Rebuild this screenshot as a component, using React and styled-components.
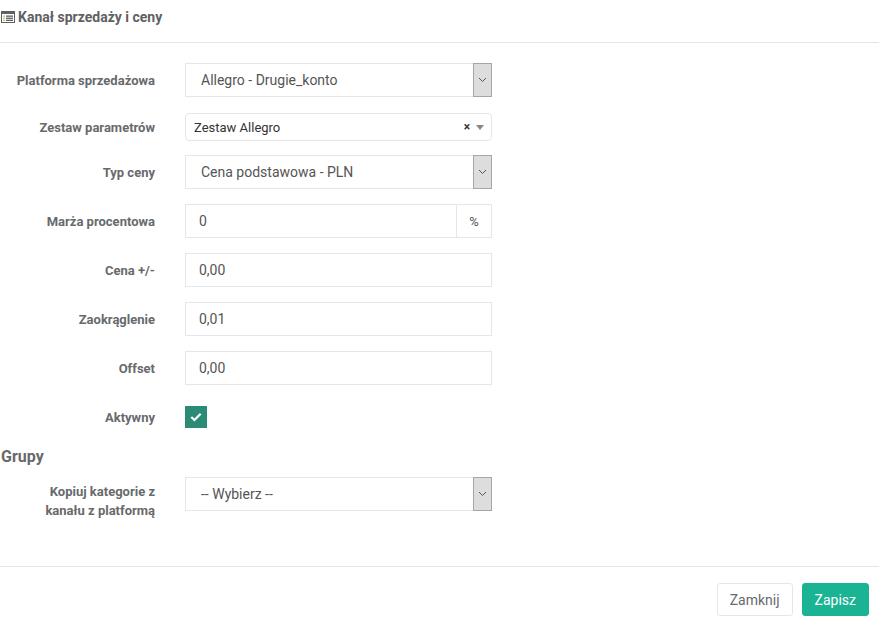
import React from 'react'
import styled, { createGlobalStyle } from 'styled-components'

const GlobalStyle = createGlobalStyle`
  html, body {
    margin: 0;
    padding: 0;
    background: #ffffff;
  }
  body {
    font-family: Roboto, "Liberation Sans", sans-serif;
    color: #676a6c;
  }
`

//
// Colours
//
const c = {
  text: '#676a6c',
  border: '#e5e6e7',
  primary: '#1ab394',
  check: '#2a8c74'
}

const Modal = styled.div`
  width: 879px;
  min-height: 626px;
  display: flex;
  flex-direction: column;
`

const Header = styled.div`
  height: 43px;
  border-bottom: 1px solid #e5e5e5;
  display: flex;
  align-items: flex-start;
  padding: 8px 0 0 1px;
  box-sizing: border-box;
  gap: 3px;
`

const Title = styled.h4`
  margin: 0;
  font-size: 14px;
  line-height: 18px;
  font-weight: 700;
  color: #5f6163;
`

const IconWrap = styled.span`
  display: flex;
  padding-top: 3px;
`

const Body = styled.div`
  padding: 20px 0 46px;
  border-bottom: 1px solid #e5e5e5;
`

const Row = styled.div`
  display: grid;
  grid-template-columns: 170px 307px;
  column-gap: 15px;
  margin-bottom: ${({ mb }) => mb || '15px'};
  align-items: ${({ top }) => (top ? 'start' : 'center')};
`

const Label = styled.label`
  text-align: right;
  font-size: 13px;
  font-weight: 700;
  color: ${c.text};
  padding: 0 15px;
  line-height: 19px;
  ${({ top }) => top && `padding-top: 5px;`}
`

const Control = styled.div`
  position: relative;
  height: ${({ h }) => h || '34px'};
  border: 1px solid ${c.border};
  box-sizing: border-box;
  display: flex;
  align-items: center;
  font-size: 14px;
  color: #555;
  background: #fff;
`

const Value = styled.span`
  flex: 1;
  padding-left: ${({ pad }) => pad || '13px'};
`

const ArrowBox = styled.span`
  width: 17px;
  align-self: stretch;
  margin: -1px -1px -1px 0;
  background: #dddddd;
  border: 1px solid #a6a6a6;
  display: flex;
  align-items: center;
  justify-content: center;
`

const Addon = styled.span`
  width: 34px;
  align-self: stretch;
  border-left: 1px solid ${c.border};
  display: flex;
  align-items: center;
  justify-content: center;
  font-size: 13px;
  color: #555;
`

const Select2 = styled(Control)`
  border-radius: 4px;
  font-size: 13px;
  color: #333;
`

const Clear = styled.span`
  font-size: 12px;
  font-weight: 700;
  color: #333;
  margin-right: 6px;
`

const Caret = styled.span`
  width: 0;
  height: 0;
  border-left: 4px solid transparent;
  border-right: 4px solid transparent;
  border-top: 5px solid #888;
  margin-right: 7px;
`

const CheckCell = styled.div`
  height: 34px;
  display: flex;
  align-items: center;
`

const Check = styled.span`
  width: 22px;
  height: 22px;
  background: ${c.check};
  display: flex;
  align-items: center;
  justify-content: center;
`

const Section = styled.h3`
  margin: 13px 0 10px 1px;
  font-size: 16px;
  line-height: 20px;
  font-weight: 700;
  color: ${c.text};
`

const Footer = styled.div`
  display: flex;
  justify-content: flex-end;
  gap: 9px;
  padding: 16px 10px;
`

const Button = styled.button`
  height: 33px;
  padding: 0 12px;
  font-family: Roboto, "Liberation Sans", sans-serif;
  font-size: 14px;
  border-radius: 3px;
  border: 1px solid ${({ primary }) => (primary ? c.primary : c.border)};
  background: ${({ primary }) => (primary ? c.primary : '#fff')};
  color: ${({ primary }) => (primary ? '#fff' : c.text)};
`

const ListIcon = () => (
  <svg width="14" height="12" viewBox="0 0 14 12">
    <rect x="0.5" y="0.5" width="13" height="11" fill="#fff" stroke="#5f6163" />
    <rect x="0.5" y="0.5" width="13" height="2.5" fill="#5f6163" />
    <rect x="2" y="4.5" width="2" height="1.3" fill="#b5d17a" />
    <rect x="2" y="6.6" width="2" height="1.3" fill="#b5d17a" />
    <rect x="2" y="8.7" width="2" height="1.3" fill="#b5d17a" />
    <rect x="5" y="4.5" width="7" height="1.3" fill="#5f6163" />
    <rect x="5" y="6.6" width="7" height="1.3" fill="#5f6163" />
    <rect x="5" y="8.7" width="7" height="1.3" fill="#5f6163" />
  </svg>
)

const Chevron = () => (
  <svg width="9" height="6" viewBox="0 0 9 6">
    <path d="M1 1 L4.5 4.5 L8 1" fill="none" stroke="#555" strokeWidth="1" />
  </svg>
)

const Select = ({ value }) => (
  <Control>
    <Value pad="15px">{value}</Value>
    <ArrowBox><Chevron /></ArrowBox>
  </Control>
)

const Input = ({ value, addon }) => (
  <Control>
    <Value>{value}</Value>
    {addon && <Addon>{addon}</Addon>}
  </Control>
)

const App = () => (
  <Modal>
    <GlobalStyle />
    <Header>
      <IconWrap><ListIcon /></IconWrap>
      <Title>Kanał sprzedaży i ceny</Title>
    </Header>
    <Body>
      <Row mb="16px">
        <Label>Platforma sprzedażowa</Label>
        <Select value="Allegro - Drugie_konto" />
      </Row>
      <Row mb="14px">
        <Label>Zestaw parametrów</Label>
        <Select2 h="28px">
          <Value pad="8px">Zestaw Allegro</Value>
          <Clear>×</Clear>
          <Caret />
        </Select2>
      </Row>
      <Row>
        <Label>Typ ceny</Label>
        <Select value="Cena podstawowa - PLN" />
      </Row>
      <Row>
        <Label>Marża procentowa</Label>
        <Input value="0" addon="%" />
      </Row>
      <Row>
        <Label>Cena +/-</Label>
        <Input value="0,00" />
      </Row>
      <Row>
        <Label>Zaokrąglenie</Label>
        <Input value="0,01" />
      </Row>
      <Row>
        <Label>Offset</Label>
        <Input value="0,00" />
      </Row>
      <Row mb="0">
        <Label>Aktywny</Label>
        <CheckCell>
          <Check>
            <svg width="12" height="10" viewBox="0 0 12 10">
              <path d="M1.3 5 L4.4 8 L10.7 1.7" fill="none" stroke="#fff" strokeWidth="2.2" />
            </svg>
          </Check>
        </CheckCell>
      </Row>
      <Section>Grupy</Section>
      <Row top mb="0">
        <Label top>Kopiuj kategorie z kanału z platformą</Label>
        <Select value="-- Wybierz --" />
      </Row>
    </Body>
    <Footer>
      <Button>Zamknij</Button>
      <Button primary>Zapisz</Button>
    </Footer>
  </Modal>
)

export default App
